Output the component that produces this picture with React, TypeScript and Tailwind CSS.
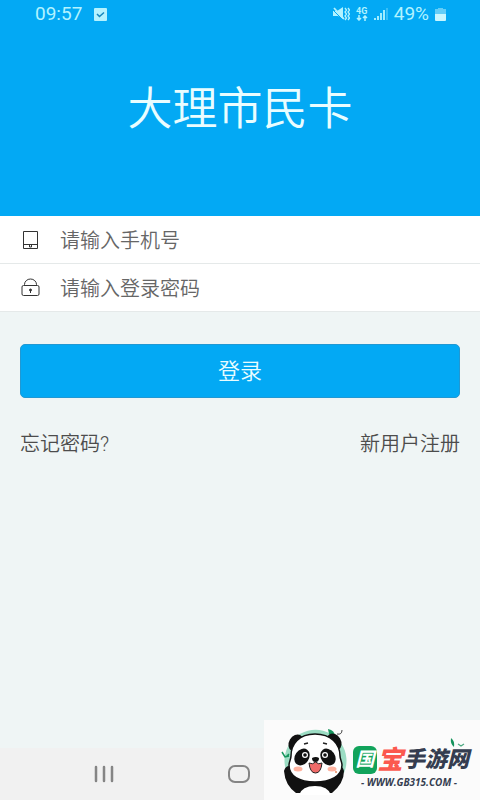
import React from "react";

const sans = "font-['Roboto','Noto_Sans_CJK_SC',sans-serif]";

function StatusBar() {
  return (
    <div className="flex h-7 items-center justify-between pl-[35px] pr-[34px] text-[#b2f3ff]">
      <div className="flex items-center gap-3">
        <span className="text-[19px] leading-7">09:57</span>
        <svg className="h-[13px] w-[13px]" viewBox="0 0 13 13" aria-hidden="true">
          <rect width="13" height="13" rx="1" fill="#b4f2ff" />
          <path d="M3 6l2.500 2.500L10 4.500" fill="none" stroke="#1686bd" strokeWidth="1.500" />
        </svg>
      </div>
      <div className="flex items-center gap-[6px]">
        <svg className="h-[14px] w-[17px]" viewBox="0 0 17 14" aria-hidden="true">
          <path d="M0 4h4l6-4v12L5 9H0z" fill="currentColor" />
          <path d="M0 3l9 9" stroke="#03a9f4" strokeWidth="1" />
          <path d="M1 1l10 11" stroke="currentColor" strokeWidth="1.800" />
          <path d="M12 1l1.500 2-1.500 2 1.500 2-1.500 2 1.500 2-1.500 2M15 1l1.500 2-1.500 2 1.500 2-1.500 2 1.500 2-1.500 2" fill="none" stroke="currentColor" strokeWidth="1.300" />
        </svg>
        <span className="flex flex-col items-center">
          <span className="text-[9px] font-bold leading-[8px]">4G</span>
          <svg className="h-[6px] w-[12px]" viewBox="0 0 12 6" aria-hidden="true">
            <path d="M3 0v5M1 3l2 2 2-2M9 6V1M7 3l2-2 2 2" fill="none" stroke="currentColor" strokeWidth="1.500" />
          </svg>
        </span>
        <svg className="h-[12px] w-[14px]" viewBox="0 0 14 12" aria-hidden="true">
          <path d="M1 10v2M4 8v4M7 5v7M10 2v10" stroke="currentColor" strokeWidth="1.800" />
          <path d="M13 0v12" stroke="currentColor" strokeWidth="1.500" opacity=".4" />
        </svg>
        <span className="text-[19px] leading-7">49%</span>
        <svg className="h-[13px] w-[11px]" viewBox="0 0 11 13" aria-hidden="true">
          <path d="M3 0h5v1h3v6H0V1h3z" fill="#62cdf8" />
          <path d="M0 6h11v6q0 1-1 1H1q-1 0-1-1z" fill="#c9f6ff" />
        </svg>
      </div>
    </div>
  );
}

function PhoneIcon() {
  return (
    <svg className="h-5 w-5 shrink-0" viewBox="0 0 20 20" fill="none" stroke="#333" aria-hidden="true">
      <path d="M3.500 1.500h14v17h-14zM3.500 14.500h14M9.500 15v2h2v-2" />
    </svg>
  );
}

function LockIcon() {
  return (
    <svg className="h-5 w-5 shrink-0" viewBox="0 0 20 20" fill="none" stroke="#333" aria-hidden="true">
      <rect x="2" y="7.500" width="17" height="10" rx="1.500" />
      <path d="M4.500 7.500V6.500a6 5.500 0 0 1 12 0v1M10.500 12v3" />
      <circle cx="10.500" cy="12" r="1" fill="#333" />
    </svg>
  );
}

function Panda() {
  return (
    <svg className="h-[68px] w-[68px] shrink-0" viewBox="0 0 68 68" aria-hidden="true">
      <path d="M6 46A31 31 0 1 1 63 46z" fill="#9bdcc3" />
      <path d="M47 2q7 1 7 8l-6-3z" fill="#16945d" />
      <path d="M1 25l3 5 4-1M5 30l3-3" stroke="#15965d" strokeWidth="1.500" fill="none" />
      <path d="M56 7q5 1 5-4" stroke="#444" fill="none" />
      <path d="M3 44q2-7 9-4l8 8h28l6-9q8-1 9 5 0 12-12 22H15Q4 58 3 44z" fill="#111" />
      <path d="M18 68q3-9 16-9t16 9z" fill="#fff" />
      <ellipse cx="15" cy="16" rx="7" ry="9" transform="rotate(30 15 16)" fill="#111" />
      <ellipse cx="53" cy="15" rx="7" ry="9" transform="rotate(-30 53 15)" fill="#111" />
      <path d="M34 7c16 0 25 10 25 22 0 3 2 6 2 9 0 11-11 17-27 17S8 49 8 38c0-3 2-6 2-9C10 17 18 7 34 7z" fill="#fff" stroke="#111" strokeWidth="1.500" />
      <ellipse cx="21" cy="30" rx="7" ry="9" transform="rotate(35 21 30)" fill="#111" />
      <ellipse cx="47" cy="30" rx="7" ry="9" transform="rotate(-35 47 30)" fill="#111" />
      <circle cx="24" cy="28" r="3" fill="#fff" />
      <circle cx="24" cy="28" r="1.800" fill="#111" />
      <circle cx="44" cy="28" r="3" fill="#fff" />
      <circle cx="44" cy="28" r="1.800" fill="#111" />
      <path d="M23 17l4-1M42 16l4 1" stroke="#222" strokeWidth="1.500" />
      <ellipse cx="17" cy="42" rx="4.500" ry="2.500" fill="#ffb3a0" />
      <ellipse cx="51" cy="42" rx="4.500" ry="2.500" fill="#ffb3a0" />
      <path d="M31 31q4-2 7 0 0 4-3.500 4T31 31z" fill="#111" />
      <path d="M28 36q4 2 6.500-1 3 3 6.500 1-1 10-6.500 10T28 36z" fill="#ef6b69" stroke="#222" />
      <circle cx="55" cy="45" r="1" fill="#e9895e" />
    </svg>
  );
}

function LogoLeaves() {
  return (
    <svg className="absolute right-3 top-4 h-4 w-5" viewBox="0 0 20 16" aria-hidden="true">
      <path d="M3 2q4 3 3 9-4-3-3-9z" fill="#16945d" />
      <path d="M10 8l3 2 3-2" fill="none" stroke="#4da982" strokeWidth="1.300" />
    </svg>
  );
}

export default function App() {
  return (
    <div className={`relative flex min-h-screen flex-col bg-[#eff5f5] ${sans}`}>
      <header className="h-[216px] bg-[#03a9f4]">
        <StatusBar />
        <h1 className="pt-12 text-center text-[45px] font-[350] leading-[68px] text-[#e9fdff]">大理市民卡</h1>
      </header>
      <main className="flex-1">
        <form onSubmit={(e) => e.preventDefault()}>
          <label className="flex h-12 items-center gap-5 border-b border-[#e5e9e9] bg-white px-5">
            <PhoneIcon />
            <input type="tel" aria-label="手机号" placeholder="请输入手机号" className="min-w-0 flex-1 pt-[2px] text-[20px] font-[350] leading-7 outline-none placeholder:text-[#666]" />
          </label>
          <label className="flex h-12 items-center gap-5 border-b border-[#e5e9e9] bg-white px-5">
            <LockIcon />
            <input type="password" aria-label="登录密码" placeholder="请输入登录密码" className="min-w-0 flex-1 pt-[2px] text-[20px] font-[350] leading-7 outline-none placeholder:text-[#666]" />
          </label>
          <div className="px-5 pt-8">
            <button type="submit" className="h-[54px] w-full rounded-[5px] border border-[#2198d3] bg-[#03a9f4] text-[22px] font-[350] text-[#e9fdff]">登录</button>
            <div className="flex justify-between pt-8 text-[20px] font-[350] leading-7 text-[#4c4c4c]">
              <a href="#forgot">忘记密码?</a>
              <a href="#register">新用户注册</a>
            </div>
          </div>
        </form>
      </main>
      <nav className="flex h-[52px] items-center bg-[#f1f1f1] pl-[94px] text-[#858585]">
        <button type="button" aria-label="最近任务">
          <svg className="h-5 w-5" viewBox="0 0 20 20" stroke="currentColor" strokeWidth="2.500" strokeLinecap="round" aria-hidden="true"><path d="M2 3v14M10 3v14M18 3v14" /></svg>
        </button>
        <button type="button" aria-label="主页" className="ml-[113px]">
          <svg className="h-6 w-6" viewBox="0 0 24 24" fill="none" stroke="currentColor" strokeWidth="2" aria-hidden="true"><rect x="2" y="4" width="20" height="16" rx="6" /></svg>
        </button>
      </nav>
      <aside className="absolute bottom-0 right-0 flex h-20 w-[216px] items-center bg-[#fbfbfb] pl-[17px] pt-[2px]">
        <Panda />
        <LogoLeaves />
        <div className="flex flex-col pl-1 pt-[10px] font-bold italic text-[#353d50]">
          <div className="flex items-center">
            <span className="w-6 rounded-[6px] bg-[#11a35b] text-center text-[19px] leading-7 text-white">国</span>
            <span className="text-[26px] font-black leading-8 text-[#fb594f]">宝</span>
            <span className="text-[22px] font-black leading-8">手游网</span>
          </div>
          <span className="pl-2 font-['Open_Sans',sans-serif] text-[10px] leading-3">- WWW.GB315.COM -</span>
        </div>
      </aside>
    </div>
  );
}
